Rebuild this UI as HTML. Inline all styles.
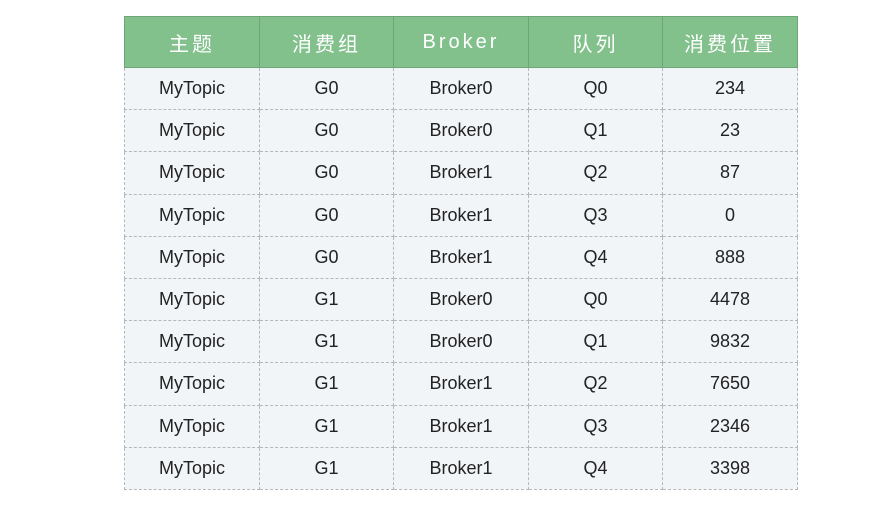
<!DOCTYPE html>
<html><head><meta charset="utf-8"><style>
body{margin:0;width:891px;height:510px;background:#fff;overflow:hidden;font-family:"Liberation Sans","Noto Sans CJK SC",sans-serif;}
table{position:absolute;left:124px;top:16px;border-collapse:collapse;table-layout:fixed;width:673px;}
td,th{border:1px dashed #b5b8bb;text-align:center;padding:0;font-size:18px;color:#222;}
th{background:#82c08c;color:#fff;font-weight:normal;height:50px;font-size:20px;letter-spacing:3px;border-color:#6ea67a;border-style:solid;}
td{background:#f2f5f8;height:41.2px;}
</style></head><body>
<table>
<colgroup><col style="width:135px"><col style="width:134px"><col style="width:135px"><col style="width:134px"><col style="width:135px"></colgroup>
<tr><th>主题</th><th>消费组</th><th>Broker</th><th>队列</th><th>消费位置</th></tr>
<tr><td>MyTopic</td><td>G0</td><td>Broker0</td><td>Q0</td><td>234</td></tr>
<tr><td>MyTopic</td><td>G0</td><td>Broker0</td><td>Q1</td><td>23</td></tr>
<tr><td>MyTopic</td><td>G0</td><td>Broker1</td><td>Q2</td><td>87</td></tr>
<tr><td>MyTopic</td><td>G0</td><td>Broker1</td><td>Q3</td><td>0</td></tr>
<tr><td>MyTopic</td><td>G0</td><td>Broker1</td><td>Q4</td><td>888</td></tr>
<tr><td>MyTopic</td><td>G1</td><td>Broker0</td><td>Q0</td><td>4478</td></tr>
<tr><td>MyTopic</td><td>G1</td><td>Broker0</td><td>Q1</td><td>9832</td></tr>
<tr><td>MyTopic</td><td>G1</td><td>Broker1</td><td>Q2</td><td>7650</td></tr>
<tr><td>MyTopic</td><td>G1</td><td>Broker1</td><td>Q3</td><td>2346</td></tr>
<tr><td>MyTopic</td><td>G1</td><td>Broker1</td><td>Q4</td><td>3398</td></tr>
</table>
</body></html>
